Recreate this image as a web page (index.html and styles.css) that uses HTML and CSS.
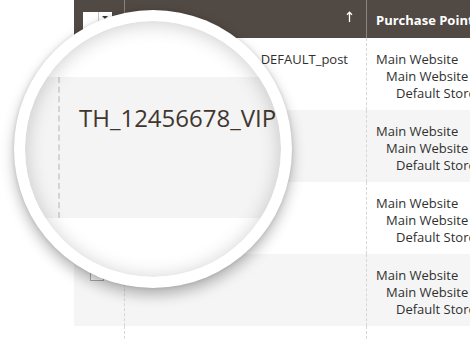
FILE: index.html
```html
<!DOCTYPE html>
<html>
<head>
<meta charset="utf-8">
<link rel="stylesheet" href="styles.css">
</head>
<body>
<div class="page">
  <div class="grid">
    <div class="hrow">
      <div class="hcell c1">
        <div class="mass"><span class="mass-box"></span><span class="mass-arrow"></span></div>
      </div>
      <div class="hcell c2">
        <svg class="sort" width="7" height="11" viewBox="0 0 7 11"><path d="M3.5 1.2 V11 M1 3.8 L3.5 1.2 L6 3.8" fill="none" stroke="#fff" stroke-width="1.3"/></svg>
      </div>
      <div class="hcell c3">Purchase Point</div>
    </div>

    <div class="brow">
      <div class="bcell c1"><span class="cb"></span></div>
      <div class="bcell c2 code">DEFAULT_post</div>
      <div class="bcell c3 stores"><div>Main Website</div><div class="l2">Main Website</div><div class="l3">Default Store</div></div>
    </div>
    <div class="brow alt">
      <div class="bcell c1"><span class="cb"></span></div>
      <div class="bcell c2 code"></div>
      <div class="bcell c3 stores"><div>Main Website</div><div class="l2">Main Website</div><div class="l3">Default Store</div></div>
    </div>
    <div class="brow">
      <div class="bcell c1"><span class="cb"></span></div>
      <div class="bcell c2 code"></div>
      <div class="bcell c3 stores"><div>Main Website</div><div class="l2">Main Website</div><div class="l3">Default Store</div></div>
    </div>
    <div class="brow alt">
      <div class="bcell c1"><span class="cb"></span></div>
      <div class="bcell c2 code"></div>
      <div class="bcell c3 stores"><div>Main Website</div><div class="l2">Main Website</div><div class="l3">Default Store</div></div>
    </div>
    <div class="brow">
      <div class="bcell c1"></div>
      <div class="bcell c2"></div>
      <div class="bcell c3"></div>
    </div>
  </div>

  <div class="lens">
    <div class="lens-inner">
      <div class="zrow">
        <div class="zgap"></div>
        <div class="ztext">TH_12456678_VIP</div>
      </div>
    </div>
  </div>
</div>
</body>
</html>
```
FILE: styles.css
```css
html, body {
  margin: 0;
  padding: 0;
  background: #fff;
}

.page {
  position: relative;
  width: 470px;
  height: 340px;
  overflow: hidden;
  background: #fff;
  font-family: "Open Sans", "DejaVu Sans", sans-serif;
}

.grid {
  margin-left: 74px;
  width: 420px;
}

.hrow {
  display: grid;
  grid-template-columns: 50px 242px 1fr;
  height: 38px;
  background: #514943;
  color: #fff;
}

.hcell + .hcell {
  border-left: 1px solid #8a837f;
}

.hcell.c1 {
  padding: 12px 0 0 9px;
}

.mass {
  display: flex;
  width: 29px;
  height: 17px;
  background: #fff;
}

.mass-box {
  width: 15px;
  border-right: 1px solid #c9c6c4;
}

.mass-arrow {
  position: relative;
  flex: 1;
}

.mass-arrow::after {
  content: "";
  position: absolute;
  left: 3px;
  top: 4px;
  border-left: 3px solid transparent;
  border-right: 3px solid transparent;
  border-top: 3px solid #41362f;
}

.hcell.c2 {
  display: flex;
  justify-content: flex-end;
  align-items: flex-start;
  padding: 11px 13px 0 0;
}

.hcell.c3 {
  display: flex;
  align-items: center;
  padding: 2px 0 0 9px;
  font-size: 13px;
  font-weight: 700;
  white-space: nowrap;
}

.brow {
  display: grid;
  grid-template-columns: 50px 242px 1fr;
  height: 72px;
  background: #fff;
  color: #303030;
  font-size: 13px;
  line-height: 17px;
}

.brow.alt {
  background: #f5f5f5;
}

.bcell {
  padding-top: 13px;
}

.bcell + .bcell {
  border-left: 1px dashed #d6d6d6;
}

.cb {
  display: block;
  width: 14px;
  height: 14px;
  margin-left: 16px;
  box-sizing: border-box;
  border: 1px solid #adadad;
  background: #fff;
}

.code {
  text-align: right;
  padding-right: 18px;
}

.stores {
  padding-left: 9px;
  white-space: nowrap;
}

.stores .l2 {
  padding-left: 10px;
}

.stores .l3 {
  padding-left: 20px;
}

.lens {
  position: absolute;
  left: 14px;
  top: 10px;
  width: 278px;
  height: 278px;
  box-sizing: border-box;
  padding: 11px;
  border-radius: 50%;
  background: #fff;
  box-shadow: 0 7px 14px rgba(0, 0, 0, 0.28), 0 0 4px rgba(0, 0, 0, 0.12);
}

.lens-inner {
  position: relative;
  width: 100%;
  height: 100%;
  box-sizing: border-box;
  padding-top: 56px;
  border-radius: 50%;
  overflow: hidden;
  background: #fff;
}

.lens-inner::after {
  content: "";
  position: absolute;
  inset: 0;
  border-radius: 50%;
  box-shadow: inset 0 2px 20px rgba(0, 0, 0, 0.2);
}

.zrow {
  display: flex;
  height: 141px;
  background: #f4f4f4;
}

.zgap {
  width: 33px;
  border-right: 2px dashed #d4d4d4;
}

.ztext {
  padding: 25px 0 0 19px;
  font-size: 24px;
  line-height: 32px;
  color: #41362f;
  white-space: nowrap;
}
```
